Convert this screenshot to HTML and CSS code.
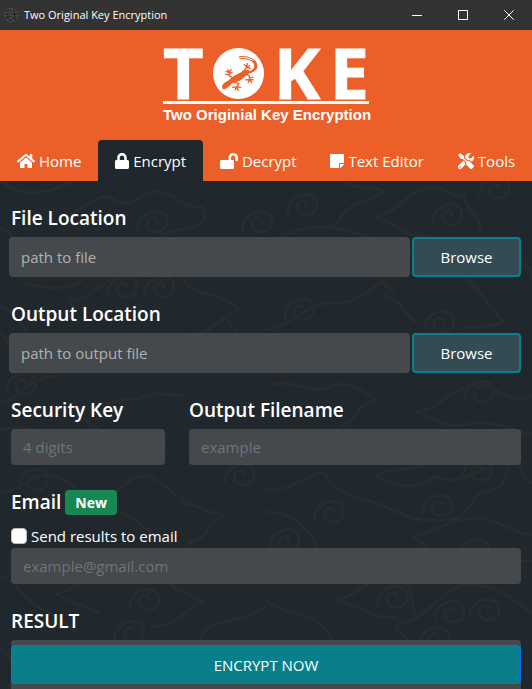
FILE: index.html
```html
<!DOCTYPE html>
<html lang="en">
<head>
<meta charset="utf-8">
<meta name="viewport" content="width=device-width, initial-scale=1">
<title>Two Original Key Encryption</title>
<link rel="stylesheet" href="styles.css">
</head>
<body>
<div class="titlebar">
  <svg class="app-icon" viewBox="0 0 16 16" aria-hidden="true"><circle cx="8" cy="8" r="6.5"/><path d="M3 5l3 1 1-4M9 2l1 4 4-1M2 9l4-1 1 3-3 2M14 9l-4 0-1 4 3 1M6 6l4 3M8 4v8"/></svg>
  <span class="window-title">Two Original Key Encryption</span>
  <button class="window-button" type="button" aria-label="Minimize"><svg viewBox="0 0 10 10"><path d="M0 5.500h10"/></svg></button>
  <button class="window-button" type="button" aria-label="Maximize"><svg viewBox="0 0 10 10"><path d="M.5.5h9v9h-9z"/></svg></button>
  <button class="window-button" type="button" aria-label="Close"><svg viewBox="0 0 10 10"><path d="M.3.3l9.400 9.400M9.700.3L.3 9.700"/></svg></button>
</div>
<header class="header">
  <div class="logo">
    <div class="logo-letters">
      <span>T</span>
      <svg class="gecko" viewBox="12 11 152 152" role="img" aria-label="O">
        <circle cx="88" cy="87" r="76" fill="#fff"/>
        <g fill="none" stroke="#ec5f29" stroke-linecap="round" stroke-linejoin="round">
          <path d="M90 37C118 34 143 46 143 65C143 80 126 85 104 86" stroke-width="3"/>
          <path d="M92 43C116 39 136 50 137 65C138 78 122 84 104 86" stroke-width="3"/>
          <path d="M134 50C147 66 134 84 108 86" stroke-width="6"/>
          <path d="M73 101L61 94L60 83M60 84L51 81M60 84L56 76M60 84L66 75M61 87L69 84M61 92L50 89" stroke-width="4"/>
          <path d="M101 83L107 75L113 67M113 67L105 61M113 67L114 57M113 67L121 64M113 69L123 72" stroke-width="4"/>
          <path d="M75 113L89 117L82 128M82 127L71 128M82 127L78 136M82 127L87 137M83 125L94 129" stroke-width="4"/>
          <path d="M111 89L120 94L121 105M121 105L110 106M121 105L117 113M121 105L127 114M121 105L132 106M121 101L131 98" stroke-width="4"/>
        </g>
        <path fill="#ec5f29" d="M39 128C39 118 47 114 58 108C66 98 84 88 96 83C106 75 115 76 122 79C121 91 106 94 100 103C90 113 75 112 66 118C60 127 48 136 41 133Z"/>
      </svg>
      <span>K</span>
      <span>E</span>
    </div>
    <div class="logo-caption">Two Originial Key Encryption</div>
  </div>
  <nav class="tabs">
    <a class="tab" href="#home"><svg viewBox="0 0 576 512"><path d="M280.370 148.260L96 300.110V464a16 16 0 0 0 16 16l112.060-.29a16 16 0 0 0 15.920-16V368a16 16 0 0 1 16-16h64a16 16 0 0 1 16 16v95.640a16 16 0 0 0 16 16.050L464 480a16 16 0 0 0 16-16V300L295.670 148.260a12.190 12.190 0 0 0-15.300 0zM571.600 251.470L488 182.560V44.050a12 12 0 0 0-12-12h-56a12 12 0 0 0-12 12v72.610L318.470 43a48 48 0 0 0-61 0L4.340 251.470a12 12 0 0 0-1.600 16.900l25.500 31A12 12 0 0 0 45.150 301l235.220-193.740a12.190 12.190 0 0 1 15.300 0L530.900 301a12 12 0 0 0 16.900-1.600l25.500-31a12 12 0 0 0-1.700-16.930z"/></svg>Home</a>
    <a class="tab active" href="#encrypt" aria-current="page"><svg viewBox="0 0 448 512"><path d="M400 224h-24v-72C376 68.200 307.800 0 224 0S72 68.200 72 152v72H48c-26.500 0-48 21.500-48 48v192c0 26.500 21.500 48 48 48h352c26.500 0 48-21.500 48-48V272c0-26.500-21.500-48-48-48zm-104 0H152v-72c0-39.700 32.300-72 72-72s72 32.300 72 72v72z"/></svg>Encrypt</a>
    <a class="tab" href="#decrypt"><svg viewBox="0 0 576 512"><path d="M423.500 0C339.500.3 272 69.500 272 153.500V224H48c-26.500 0-48 21.500-48 48v192c0 26.500 21.500 48 48 48h352c26.500 0 48-21.500 48-48V272c0-26.500-21.500-48-48-48h-48v-71.100c0-39.600 31.700-72.500 71.300-72.900 40-.4 72.700 32.100 72.700 72v80c0 13.300 10.700 24 24 24h32c13.300 0 24-10.700 24-24v-80C576 68 507.500-.3 423.500 0z"/></svg>Decrypt</a>
    <a class="tab" href="#editor"><svg viewBox="0 0 448 512"><path d="M312 320h136V56c0-13.300-10.700-24-24-24H24C10.700 32 0 42.700 0 56v400c0 13.300 10.700 24 24 24h264V344c0-13.200 10.800-24 24-24zm129 55l-98 98c-4.500 4.500-10.600 7-17 7h-6V352h128v6.100c0 6.300-2.500 12.400-7 16.900z"/></svg>Text Editor</a>
    <a class="tab" href="#tools"><svg viewBox="0 0 512 512"><path d="M501.100 395.700L384 278.600c-23.100-23.100-57.600-27.600-85.400-13.900L192 158.100V96L64 0 0 64l96 128h62.100l106.600 106.600c-13.600 27.800-9.200 62.300 13.900 85.400l117.100 117.100c14.600 14.600 38.200 14.600 52.700 0l52.700-52.700c14.500-14.600 14.500-38.200 0-52.700zM331.700 225c28.300 0 54.900 11 74.900 31l19.400 19.400c15.800-6.900 30.800-16.500 43.800-29.500 37.100-37.100 49.700-89.300 37.900-136.700-2.200-9-13.500-12.100-20.100-5.500l-74.400 74.400-67.900-11.300L334 98.900l74.400-74.400c6.600-6.600 3.400-17.900-5.700-20.200-47.400-11.700-99.600.9-136.600 37.900-28.500 28.500-41.900 66.100-41.200 103.600l82.100 82.100c8.100-1.900 16.500-2.900 24.700-2.900zm-103.900 82l-56.700-56.700L18.700 402.800c-25 25-25 65.500 0 90.500s65.500 25 90.500 0l123.600-123.600c-7.600-19.900-9.900-41.600-5-62.700zM64 472c-13.200 0-24-10.800-24-24 0-13.300 10.700-24 24-24s24 10.700 24 24c0 13.200-10.700 24-24 24z"/></svg>Tools</a>
  </nav>
</header>
<main class="main">
  <svg class="pattern" viewBox="0 181 532 508" preserveAspectRatio="xMidYMin slice" aria-hidden="true">
    <defs><path id="curl" d="M-15 9C-18-12 14-18 14 0C14 13-6 13-6 2C-6-6 5-6 4 1"/></defs>
    <use href="#curl" x="153" y="222"/><use href="#curl" x="123" y="287"/><use href="#curl" x="160" y="287"/>
    <use href="#curl" x="303" y="205"/><use href="#curl" x="448" y="215"/><use href="#curl" x="300" y="310"/>
    <use href="#curl" x="440" y="322"/><use href="#curl" x="495" y="188"/><use href="#curl" x="258" y="222"/>
    <use href="#curl" x="480" y="392"/><use href="#curl" x="330" y="512"/><use href="#curl" x="438" y="506"/>
    <use href="#curl" x="475" y="550"/><use href="#curl" x="285" y="540"/><use href="#curl" x="478" y="470"/>
    <use href="#curl" x="145" y="600"/><use href="#curl" x="130" y="632"/><use href="#curl" x="393" y="597"/>
    <use href="#curl" x="450" y="612"/><use href="#curl" x="485" y="610"/><use href="#curl" x="435" y="638"/>
    <use href="#curl" x="22" y="384"/><use href="#curl" x="34" y="480"/><use href="#curl" x="240" y="475"/>
    <path d="M70 214C94 204 98 190 115 200C134 212 140 188 160 192C180 196 180 208 202 207C216 231 174 228 160 235M0 181C28 204 60 187 75 181M0 228C16 233 15 249 36 254M26 283C52 292 75 288 85 278"/>
    <path d="M375 218C400 212 406 190 431 188C447 184 448 199 464 196C466 210 482 219 480 230M375 218C400 223 404 239 428 236M345 183C367 192 380 186 384 191C365 204 347 203 340 219L330 228M266 249C296 221 327 224 361 234C378 240 390 250 414 253"/>
    <path d="M68 300C96 301 101 275 128 277C158 272 170 270 184 280C192 298 222 290 239 310C217 318 215 331 190 335M68 300L78 314M266 330C290 326 305 306 327 303C349 306 367 294 382 281L395 295M382 295C405 301 405 317 416 322M458 274C480 284 484 304 504 322C484 329 470 326 458 329"/>
    <path d="M0 305C24 316 21 339 46 340M0 332L18 354M198 339C210 325 220 324 226 318L237 333M415 412C442 410 448 388 475 385C490 381 499 397 520 400L532 396M415 412C438 420 446 430 474 423C500 421 514 432 532 434"/>
    <path d="M270 385C294 379 301 392 325 389C345 379 354 385 377 400C353 404 360 422 339 426M0 403C21 399 28 377 55 376M80 410C106 409 118 395 138 400C156 388 168 397 184 395"/>
    <path d="M0 494C26 486 36 473 51 475C76 481 76 495 91 503C116 503 122 476 146 476C170 482 172 504 223 515C203 529 208 540 187 543M180 504L202 507M96 510C124 503 137 526 155 534"/>
    <path d="M266 489C288 493 298 478 324 472C334 492 355 497 369 501C394 507 408 523 434 520C470 524 469 499 482 492C509 489 504 476 508 466M375 475C403 464 415 476 434 455M375 475C400 490 420 489 435 476C455 488 477 470 490 467"/>
    <path d="M266 512C294 511 310 532 318 548M413 536C436 532 450 518 475 518C500 518 505 532 532 535M413 536L430 550M55 594C76 592 86 570 112 570C140 576 170 576 175 589C190 592 192 599 202 602C182 611 178 626 151 627M55 594C75 604 86 606 100 613"/>
    <path d="M337 600C361 596 364 576 387 583C418 574 410 609 416 618L432 607M337 600C360 605 372 620 397 617M394 626C424 622 433 597 460 586C495 580 514 602 532 613M394 626L410 641M0 575C22 583 21 603 52 614L78 632M200 640C206 619 226 627 266 608M266 601C290 619 318 607 333 642"/>
    <path d="M460 258C475 245 490 255 492 262M513 253C520 270 532 260 532 280M0 430C22 422 58 434 62 454M84 419C120 450 140 426 166 442M0 648C12 656 20 670 8 689M517 454C520 478 530 482 532 484M490 553C508 557 518 563 532 560"/>
  </svg>
  <form class="form">
    <section class="group">
      <label class="heading" for="file">File Location</label>
      <div class="picker"><input class="field" id="file" type="text" placeholder="path to file"><button class="browse" type="button">Browse</button></div>
    </section>
    <section class="group">
      <label class="heading" for="output">Output Location</label>
      <div class="picker"><input class="field" id="output" type="text" placeholder="path to output file"><button class="browse" type="button">Browse</button></div>
    </section>
    <div class="columns">
      <section class="group">
        <label class="heading" for="key">Security Key</label>
        <input class="field" id="key" type="text" placeholder="4 digits">
      </section>
      <section class="group">
        <label class="heading" for="filename">Output Filename</label>
        <input class="field" id="filename" type="text" placeholder="example">
      </section>
    </div>
    <section class="group">
      <label class="heading" for="email">Email <span class="badge">New</span></label>
      <div class="check"><input id="send" type="checkbox"><label for="send">Send results to email</label></div>
      <input class="field" id="email" type="email" placeholder="example@gmail.com">
    </section>
    <section class="group result">
      <label class="heading" for="result">RESULT</label>
      <textarea class="field" id="result" readonly></textarea>
      <button class="submit" type="submit">ENCRYPT NOW</button>
    </section>
  </form>
</main>
</body>
</html>
```
FILE: styles.css
```css
* {
  box-sizing: border-box;
}

body {
  margin: 0;
  min-height: 100vh;
  display: flex;
  flex-direction: column;
  background: #21282d;
  color: #fff;
  font: 15px/24px "Open Sans", "Noto Sans", sans-serif;
}

button,
input,
textarea {
  font: inherit;
  color: inherit;
}

.titlebar {
  height: 30px;
  display: flex;
  align-items: center;
  background: #333;
  font-size: 11px;
}

.app-icon {
  width: 16px;
  height: 16px;
  margin: 0 5px 0 3px;
  fill: #292929;
  stroke: #5a5a5a;
  stroke-width: 1;
  stroke-dasharray: 2 1;
}

.window-title {
  flex: 1;
}

.window-button {
  width: 46px;
  height: 30px;
  padding: 0;
  display: grid;
  place-items: center;
  border: 0;
  background: none;
}

.window-button svg {
  width: 10px;
  height: 10px;
  fill: none;
  stroke: #fff;
}

.header {
  background: #ec5f29;
}

.logo {
  width: 206px;
  height: 110px;
  margin: 0 auto;
  padding-top: 18px;
}

.logo-letters {
  height: 56px;
  display: flex;
  justify-content: space-between;
  align-items: flex-start;
  border-bottom: 3px solid #fff;
  font-size: 70px;
  font-weight: 700;
  line-height: 49px;
  -webkit-text-stroke: 1px #fff;
}

.gecko {
  width: 51px;
  height: 51px;
}

.logo-caption {
  font: 700 15px/22px "Liberation Sans", sans-serif;
  white-space: nowrap;
}

.tabs {
  display: flex;
}

.tab {
  flex: 1 1 auto;
  height: 41px;
  display: flex;
  align-items: center;
  justify-content: center;
  gap: 4px;
  border-radius: 4px 4px 0 0;
  color: #fff;
  text-decoration: none;
  white-space: nowrap;
}

.tab.active {
  background: #21282d;
}

.tab svg {
  height: 16px;
  fill: #fff;
}

.main {
  flex: 1;
  display: flex;
  position: relative;
}

.pattern {
  position: absolute;
  inset: 0;
  width: 100%;
  height: 100%;
  fill: none;
  stroke: #262c2f;
  stroke-width: 3;
}

.form {
  flex: 1;
  position: relative;
  display: flex;
  flex-direction: column;
  gap: 24px;
  padding: 24px 11px 0;
}

.group {
  display: flex;
  flex-direction: column;
}

.heading {
  display: flex;
  align-items: center;
  gap: 4px;
  height: 24px;
  margin-bottom: 8px;
  padding-top: 2px;
  font-size: 19px;
  font-weight: 600;
}

.columns {
  display: grid;
  grid-template-columns: 154px 1fr;
  gap: 24px;
}

.field {
  width: 100%;
  height: 36px;
  padding: 0 12px;
  border: 0;
  border-radius: 4px;
  background: rgba(93, 95, 97, 0.6);
  outline: 0;
}

.field::placeholder {
  color: #6c757d;
  opacity: 1;
}

.picker {
  display: flex;
  gap: 2px;
  margin-left: -2px;
}

.picker .field {
  flex: 1;
  min-width: 0;
  height: 40px;
}

.picker .field::placeholder {
  color: #afb1b3;
}

.browse {
  width: 109px;
  height: 40px;
  border: 2px solid #087f8b;
  border-radius: 4px;
  background: #334b52;
}

.badge {
  padding: 0 10px;
  border-radius: 4px;
  background: #198754;
  font-size: 14px;
  font-weight: 700;
  line-height: 25px;
}

.check {
  display: flex;
  align-items: center;
  gap: 4px;
  height: 24px;
  margin-top: 3px;
}

.check input {
  appearance: none;
  width: 16px;
  height: 16px;
  margin: 0;
  border: 1px solid #bfbfbf;
  border-radius: 4px;
  background: #fff;
}

.result {
  flex: 1;
  position: relative;
}

.result .field {
  flex: 1;
  min-height: 49px;
  border-radius: 4px 4px 0 0;
  resize: none;
}

.submit {
  position: absolute;
  right: 0;
  bottom: 5px;
  left: 0;
  height: 39px;
  padding: 0;
  border: 1px solid #0d6efd;
  border-radius: 4px;
  background: #087f8b;
}
```
